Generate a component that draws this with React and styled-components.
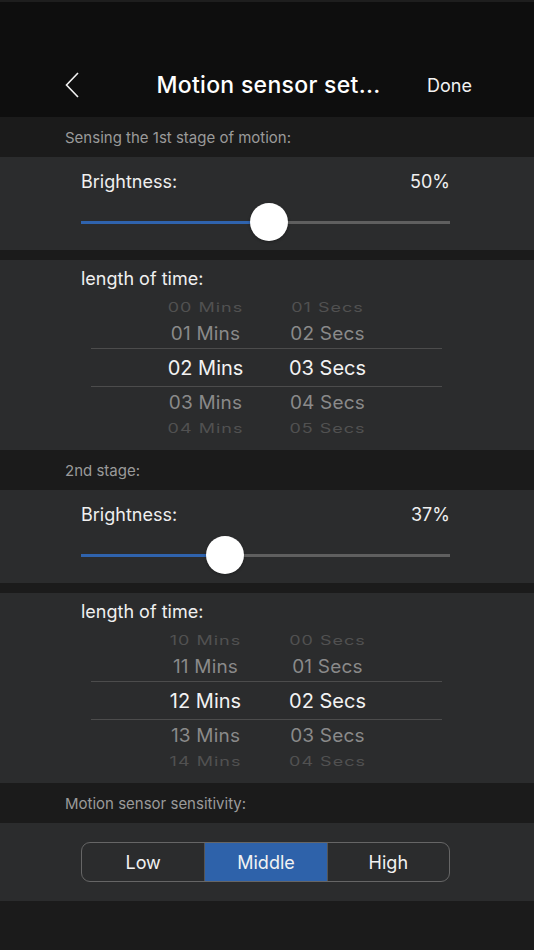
import React from 'react'
import styled, { createGlobalStyle } from 'styled-components'

const GlobalStyle = createGlobalStyle`
  html, body {
    margin: 0;
    padding: 0;
    background: #1b1b1b;
  }
  body {
    font-family: Inter, "Noto Sans", "Liberation Sans", sans-serif;
    color: #f2f2f2;
  }
  * { box-sizing: border-box; }
`

const Page = styled.div`
  width: 534px;
  min-height: 950px;
  background: #1b1b1b;
`

const Header = styled.header`
  height: 117px;
  background: #0e0e0e;
  border-top: 2px solid #1e1e1e;
  padding-top: 51px;
`

const NavRow = styled.div`
  height: 64px;
  display: grid;
  grid-template-columns: 80px 1fr 80px;
  align-items: center;
  padding: 0 62px 0 65px;
`

const BackButton = styled.button`
  background: none;
  border: none;
  padding: 0;
  display: flex;
  align-items: center;
  cursor: pointer;
`

const Title = styled.h1`
  margin: 0;
  text-align: center;
  font-size: 23px;
  font-weight: 500;
  color: #fff;
  white-space: nowrap;
  letter-spacing: 0.3px;
`

const DoneButton = styled.button`
  justify-self: end;
  background: none;
  border: none;
  padding: 0;
  font-family: inherit;
  font-size: 18px;
  color: #f2f2f2;
`

const SectionLabel = styled.div`
  height: 40px;
  display: flex;
  align-items: center;
  padding-left: 65px;
  font-size: 15px;
  color: #9a9a9a;
`

const Card = styled.section`
  background: #2b2c2d;
  height: ${p => p.h}px;
  padding: 0 84px 0 81px;
  margin-top: ${p => p.gap || 0}px;
`

const LabelRow = styled.div`
  display: flex;
  justify-content: space-between;
  align-items: center;
  height: ${p => p.h || 48}px;
  font-size: 18px;
  color: #f0f0f0;
`

const SliderWrap = styled.div`
  position: relative;
  height: 34px;
  display: flex;
  align-items: center;
`

const Track = styled.div`
  width: 100%;
  height: 3px;
  background: #5f5f5f;
  display: flex;
`

const Fill = styled.div`
  height: 100%;
  background: #2f63ad;
`

const Thumb = styled.div`
  position: absolute;
  top: 50%;
  width: 38px;
  height: 38px;
  border-radius: 50%;
  background: #fff;
  transform: translate(-50%, -50%);
  box-shadow: 0 1px 3px rgba(0, 0, 0, 0.3);
`

function Slider({ value }) {
  const left = `calc(19px + (100% - 31px) * ${value / 100})`
  return (
    <SliderWrap>
      <Track>
        <Fill style={{ width: left }} />
      </Track>
      <Thumb style={{ left }} />
    </SliderWrap>
  )
}

const Picker = styled.div`
  width: 351px;
  margin: 0 0 0 10px;
  height: 139px;
  overflow: hidden;
`

const PickerRow = styled.div`
  display: grid;
  grid-template-columns: 122px 122px;
  justify-content: center;
  align-items: center;
  height: ${p => p.h}px;
  ${p => p.selected && `
    border-top: 1px solid #4c4c4c;
    border-bottom: 1px solid #4c4c4c;
  `}
`

const PickerCell = styled.span`
  text-align: center;
  white-space: nowrap;
  font-size: ${p => p.size}px;
  color: ${p => p.color};
  transform: scaleY(${p => p.squash});
  letter-spacing: ${p => p.spacing || 0}px;
`

const rowStyles = [
  { h: 22, size: 18, color: '#515151', squash: 0.7, spacing: 1 },
  { h: 30, size: 19, color: '#8a8a8a', squash: 0.95, spacing: 0.2 },
  { h: 39, size: 20, color: '#f2f2f2', squash: 1, selected: true },
  { h: 30, size: 19, color: '#8a8a8a', squash: 0.95, spacing: 0.2 },
  { h: 22, size: 18, color: '#515151', squash: 0.7, spacing: 1 },
]

function TimePicker({ mins, secs }) {
  return (
    <Picker>
      {rowStyles.map((r, i) => (
        <PickerRow key={i} h={r.h} selected={r.selected}>
          <PickerCell size={r.size} color={r.color} squash={r.squash} spacing={r.spacing}>
            {mins[i]} Mins
          </PickerCell>
          <PickerCell size={r.size} color={r.color} squash={r.squash} spacing={r.spacing}>
            {secs[i]} Secs
          </PickerCell>
        </PickerRow>
      ))}
    </Picker>
  )
}

const SegmentCard = styled(Card)`
  display: flex;
  align-items: center;
`

const Segmented = styled.div`
  width: 100%;
  height: 40px;
  border: 1px solid #666;
  border-radius: 9px;
  overflow: hidden;
  display: grid;
  grid-template-columns: repeat(3, 1fr);
`

const Segment = styled.button`
  border: none;
  border-left: ${p => (p.first ? 'none' : '1px solid #555')};
  background: ${p => (p.active ? '#2e62aa' : 'transparent')};
  color: #f2f2f2;
  font-family: inherit;
  font-size: 18px;
  padding: 0;
`

function BrightnessCard({ value }) {
  return (
    <Card h={93}>
      <LabelRow h={48}>
        <span>Brightness:</span>
        <span>{value}%</span>
      </LabelRow>
      <Slider value={value} />
    </Card>
  )
}

function TimeCard({ mins, secs }) {
  return (
    <Card h={190} gap={10}>
      <LabelRow h={36}>
        <span>length of time:</span>
      </LabelRow>
      <TimePicker mins={mins} secs={secs} />
    </Card>
  )
}

export default function App() {
  return (
    <Page>
      <GlobalStyle />
      <Header>
        <NavRow>
          <BackButton aria-label="Back">
            <svg width="14" height="26" viewBox="0 0 14 26" fill="none">
              <path d="M13 1 L1.5 13 L13 25" stroke="#f2f2f2" strokeWidth="1.6" />
            </svg>
          </BackButton>
          <Title>Motion sensor set...</Title>
          <DoneButton>Done</DoneButton>
        </NavRow>
      </Header>

      <SectionLabel>Sensing the 1st stage of motion:</SectionLabel>
      <BrightnessCard value={50} />
      <TimeCard mins={['00', '01', '02', '03', '04']} secs={['01', '02', '03', '04', '05']} />

      <SectionLabel>2nd stage:</SectionLabel>
      <BrightnessCard value={37} />
      <TimeCard mins={['10', '11', '12', '13', '14']} secs={['00', '01', '02', '03', '04']} />

      <SectionLabel>Motion sensor sensitivity:</SectionLabel>
      <SegmentCard h={78}>
        <Segmented>
          <Segment first>Low</Segment>
          <Segment active>Middle</Segment>
          <Segment>High</Segment>
        </Segmented>
      </SegmentCard>
    </Page>
  )
}
